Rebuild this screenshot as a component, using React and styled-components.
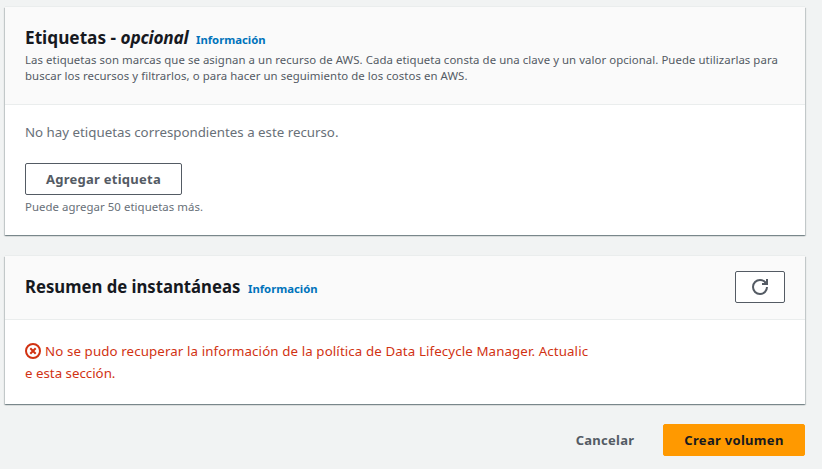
import React from "react";
import styled, { createGlobalStyle } from "styled-components";

const Global = createGlobalStyle`
  * { box-sizing: border-box; }
  body { margin: 0; background: #f1f3f3; font-family: "Noto Sans", "Open Sans", sans-serif; color: #16191f; }
`;
const Page = styled.main`
  width: 822px; height: 469px; padding: 7px 17px 0 5px; overflow: hidden; background: #f1f3f3;
`;
const Card = styled.section`
  height: ${(p) => p.$height}px; background: #fff;
  margin-bottom: ${(p) => p.$gap}px;
  box-shadow: 0 -1px 0 0 #eaeded, 0 1px 1px 0 rgba(0,28,36,.3), 1px 1px 1px 0 rgba(0,28,36,.15), -1px 1px 1px 0 rgba(0,28,36,.15);
`;
const Header = styled.header`
  display: flex; justify-content: space-between; height: ${(p) => p.$height}px;
  padding: 15px 20px; background: #fafafa; border-bottom: 1px solid #eaeded;
`;
const TitleRow = styled.div`display: flex; align-items: baseline; height: 30px;`;
const Title = styled.h2`
  margin: 0; font-size: 18px; line-height: 30px; font-weight: 700; white-space: nowrap;
  transform: scaleX(${(p) => p.$sx}); transform-origin: left; width: ${(p) => p.$w}px;
`;
const Optional = styled.i`letter-spacing: -.25px;`;
const Info = styled.a`color: #0073bb; font-size: 11.3px; font-weight: 700; white-space: nowrap;`;
const Description = styled.p`
  margin: 0; color: #545b64; font-size: 11.4px; line-height: 16px; white-space: nowrap; letter-spacing: .058px;
`;
const Body = styled.div`padding: 16px 20px;`;
const Empty = styled.p`margin: 0 0 20px; font-size: 13.3px; line-height: 22px; color: #687078;`;
const Button = styled.button`
  display: flex; align-items: center; justify-content: center; width: ${(p) => p.$w}px; height: 32px;
  padding: 0; border: 1px solid #545b64; border-radius: 2px; background: #fff; color: #545b64;
  font: 700 13px "Noto Sans", sans-serif; letter-spacing: .25px;
`;
const Primary = styled(Button)`background: #ff9900; border-color: #ff9900; color: #16191f; letter-spacing: .3px;`;
const Plain = styled(Button)`background: transparent; border-color: transparent;`;
const Hint = styled.p`margin: 4px 0 0; font-size: 11.4px; line-height: 16px; color: #687078; letter-spacing: .05px;`;
const ErrorText = styled.p`margin: 4px 0 0; color: #d13212; font-size: 13.3px; line-height: 22px; white-space: nowrap;`;
const ErrorLine = styled.span`letter-spacing: .112px;`;
const ErrorIcon = styled.svg`width: 16px; height: 16px; vertical-align: -3px; margin-right: 4px;`;
const Actions = styled.footer`display: flex; justify-content: flex-end; gap: 8px;`;

function RefreshIcon() {
  return (
    <svg width="16" height="16" viewBox="0 0 16 16" fill="none" stroke="currentColor" strokeWidth="2">
      <path d="M15 8a7 7 0 1 1-7-7c2.4 0 4.5 1.2 5.8 3" />
      <path d="M10 5h5V0" />
      <path d="M12 4h3V1z" fill="currentColor" stroke="none" />
    </svg>
  );
}

export default function App() {
  return (
    <><Global /><Page>
      <Card $height={228} $gap={21}>
        <Header $height={98}><div>
          <TitleRow><Title $sx={0.957} $w={171}>Etiquetas - <Optional>opcional</Optional></Title><Info>Información</Info></TitleRow>
          <Description>Las etiquetas son marcas que se asignan a un recurso de AWS. Cada etiqueta consta de una clave y un valor opcional. Puede utilizarlas para<br />buscar los recursos y filtrarlos, o para hacer un seguimiento de los costos en AWS.</Description>
        </div></Header>
        <Body><Empty>No hay etiquetas correspondientes a este recurso.</Empty>
          <Button $w={157}>Agregar etiqueta</Button><Hint>Puede agregar 50 etiquetas más.</Hint></Body>
      </Card>
      <Card $height={148} $gap={20}>
        <Header $height={64}>
          <TitleRow><Title $sx={0.928} $w={223}>Resumen de instantáneas</Title><Info>Información</Info></TitleRow>
          <Button $w={50} aria-label="Actualizar"><RefreshIcon /></Button>
        </Header>
        <Body><ErrorText><ErrorIcon viewBox="0 0 16 16" fill="none" stroke="currentColor" strokeWidth="2"><circle cx="8" cy="8" r="7" /><path d="m5.3 5.3 5.4 5.4m0-5.4-5.4 5.4" /></ErrorIcon><ErrorLine>No se pudo recuperar la información de la política de Data Lifecycle Manager. Actualic</ErrorLine><br />e esta sección.</ErrorText></Body>
      </Card>
      <Actions><Plain $w={100}>Cancelar</Plain><Primary $w={142}>Crear volumen</Primary></Actions>
    </Page></>
  );
}
